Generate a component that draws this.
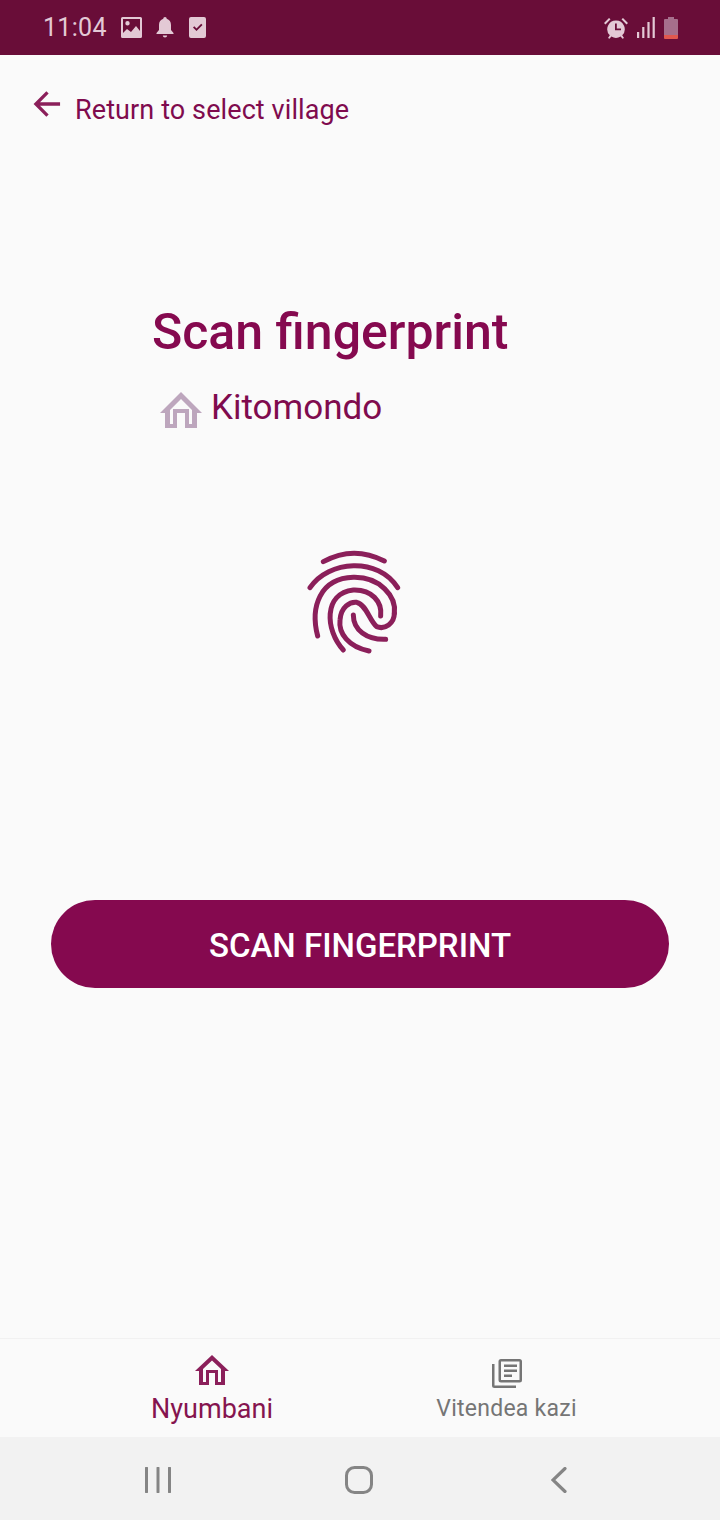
<script>
</script>

<div class="screen">
  <div class="status">
    <span class="time">11:04</span>
    <svg class="si img" viewBox="0 0 21 21"><path fill-rule="evenodd" d="M1.500 0h18A1.500 1.500 0 0 1 21 1.500v18a1.500 1.500 0 0 1-1.500 1.500h-18A1.500 1.500 0 0 1 0 19.500v-18A1.500 1.500 0 0 1 1.500 0zM2 2v14l4-4 4 3 5-6 4 5V2zM6.500 4a2.200 2.200 0 1 1 0 4.400 2.200 2.200 0 0 1 0-4.400z"/></svg>
    <svg class="si bell" viewBox="0 0 18 21"><path d="M9 0c1 0 1.700.8 1.700 1.800C13.500 2.600 15 5 15 8v5l2.500 3v1H.5v-1L3 13V8c0-3 1.500-5.400 4.300-6.200C7.300.8 8 0 9 0zM6.800 18.500h4.400A2.200 2.200 0 0 1 9 20.600a2.200 2.200 0 0 1-2.200-2.100z"/></svg>
    <svg class="si check" viewBox="0 0 17 21"><path fill-rule="evenodd" d="M2 0h13a2 2 0 0 1 2 2v17a2 2 0 0 1-2 2H2a2 2 0 0 1-2-2V2a2 2 0 0 1 2-2zM4 10.500l3.500 3.500 6-6-1.300-1.200-4.700 4.600-2.200-2.200z"/></svg>
    <span class="spacer"></span>
    <svg class="si alarm" viewBox="0 0 24 22"><path fill-rule="evenodd" d="M12 3.500a8.700 8.700 0 0 1 6.200 14.800l1.800 2.700-1.500.8-1.900-2.300a8.700 8.700 0 0 1-9.200 0L5.500 21.800 4 21l1.800-2.700A8.700 8.700 0 0 1 12 3.500zM11 6.500v6.800h6v-1.700h-4.200V6.500zM0 6l5-5 1.500 1.300L1.500 7.500zM24 6l-5-5-1.500 1.300 5 5.200z"/></svg>
    <svg class="si signal" viewBox="0 0 18 21"><path d="M0 15h2.200v6H0zM5.200 10h2.200v11H5.200zM10.400 5h2.200v16h-2.200zM15.600 0h2.200v21h-2.200z"/></svg>
    <svg class="batt" viewBox="0 0 14 22"><path fill="#a66f8c" d="M4 0h6v2h3a1 1 0 0 1 1 1v15H0V3a1 1 0 0 1 1-1h3z"/><path fill="#e0584f" d="M0 18h14v3a1 1 0 0 1-1 1H1a1 1 0 0 1-1-1z"/></svg>
  </div>

  <main class="main">
    <div class="back">
      <svg class="arrow" viewBox="0 0 30 28"><path d="M28 14H3M15 2 3 14l12 12"/></svg>
      <span>Return to select village</span>
    </div>

    <div class="head">
      <h1>Scan fingerprint</h1>
      <div class="village">
        <svg class="house" viewBox="0 0 42 36"><path fill-rule="evenodd" d="M21 0 42 21h-5v15H25V21h-8v15H5V21H0zM21 7 10 18v14h3V17h16v15h3V18z"/></svg>
        <span>Kitomondo</span>
      </div>
    </div>

    <svg class="print" viewBox="0 0 360 375">
      <path d="M85 65Q175 15 268 63"/>
      <path d="M45 143C100 60 250 50 308 143"/>
      <path d="M68 288C45 200 75 115 175 112C255 110 305 170 298 220"/>
      <path d="M145 330C90 270 85 160 175 150C230 148 262 185 257 228"/>
      <path d="M222 333C160 320 130 280 135 240C138 200 165 185 185 187C215 195 222 240 245 260C270 270 298 250 298 220"/>
      <path d="M175 225C175 270 215 300 272 298"/>
    </svg>

    <button class="scan">SCAN FINGERPRINT</button>
  </main>

  <nav class="tabs">
    <div class="tab active">
      <svg class="tabicon" viewBox="0 0 34 30"><path fill-rule="evenodd" d="M17 0 34 16h-4v14H20V18h-6v12H4V16H0zM17 5.500 8 14v13h3V15h12v12h3V14z"/></svg>
      <span>Nyumbani</span>
    </div>
    <div class="tab">
      <svg class="tabicon news" viewBox="0 0 30 30"><path fill-rule="evenodd" d="M2.500 5v21.500H24V29H2.500A2.500 2.500 0 0 1 0 26.500V5zM9 0h18.500A2.500 2.500 0 0 1 30 2.500V21a2.500 2.500 0 0 1-2.500 2.500H9A2.500 2.500 0 0 1 6.500 21V2.500A2.500 2.500 0 0 1 9 0zM9 2.500V21h18.500V2.500zM12 5.500h13V8H12zM12 10.500h13V13H12zM12 15.500h8V18h-8z"/></svg>
      <span class="lbl2">Vitendea kazi</span>
    </div>
  </nav>

  <div class="sysnav">
    <svg class="recents" viewBox="0 0 26 26"><path d="M1.500 1v24M13 1v24M24.500 1v24"/></svg>
    <svg class="home" viewBox="0 0 28 28"><rect x="1.500" y="1.500" width="25" height="25" rx="8"/></svg>
    <svg class="backk" viewBox="0 0 16 26"><path d="M14 1.500 2 13l12 11.500"/></svg>
  </div>
</div>

<style>
  :global(body) { margin: 0; }
  .screen {
    width: 720px; height: 1520px; display: flex; flex-direction: column;
    background: #fafafa; font-family: Roboto, sans-serif; overflow: hidden;
  }
  .status {
    height: 55px; flex: none; background: #690d38; color: #e3c9d5;
    display: flex; align-items: center; padding: 0 42px 0 43px; box-sizing: border-box;
  }
  .time { font-size: 25px; letter-spacing: 0.3px; margin-right: 14px; }
  .si { fill: #e3c9d5; display: block; }
  .img { width: 21px; height: 21px; margin-right: 14px; }
  .bell { width: 18px; height: 21px; margin-right: 15px; }
  .check { width: 17px; height: 21px; }
  .spacer { flex: 1; }
  .alarm { width: 24px; height: 22px; margin-right: 9px; }
  .signal { width: 18px; height: 21px; margin-right: 9px; }
  .batt { width: 14px; height: 22px; display: block; }

  .main { flex: 1; display: flex; flex-direction: column; min-height: 0; }
  .back {
    display: flex; align-items: flex-start; padding: 35px 0 0 33px;
    color: #7f0b4e; font-size: 27px; letter-spacing: 0.1px; height: 40px;
  }
  .back span { margin-left: 13px; margin-top: 3px; line-height: 34px; }
  .arrow { width: 29px; height: 28px; fill: none; stroke: #8b1f5a; stroke-width: 3.400; flex: none; }

  .head { margin: 174px 0 0 152px; }
  h1 { margin: 0; font-size: 50px; font-weight: 500; color: #85094f; line-height: 56px; }
  .village { display: flex; align-items: center; margin: 28px 0 0 8px; color: #7f0b4e; font-size: 35px; line-height: 40px; }
  .house { width: 42px; height: 36px; fill: #bda6bd; margin-right: 9px; margin-top: 4px; }

  .print {
    width: 120px; height: 125px; margin: 112px 0 0 295px; display: block; fill: none;
    stroke: #8b1f5a; stroke-width: 15; stroke-linecap: round;
  }
  .scan {
    margin: 235px 51px 0; height: 88px; border: 0; border-radius: 44px; background: #85094f;
    color: #fff; font: 500 33px Roboto, sans-serif; padding: 2px 0 0;
  }

  .tabs {
    height: 99px; flex: none; display: flex; box-sizing: border-box;
    border-top: 1px solid #f1f1f1; background: #fafafa; padding: 16px 66px 0 65px;
  }
  .tab { width: 294px; display: flex; flex-direction: column; align-items: center; color: #85144f; font-size: 27px; line-height: 32px; }
  .tabicon { width: 34px; height: 30px; fill: #8b1f5a; margin-bottom: 8px; display: block; }
  .news { width: 30px; height: 30px; fill: #757575; margin-top: 4px; margin-bottom: 3px; margin-left: 1px; }
  .lbl2 { color: #757575; font-size: 23px; letter-spacing: 0.25px; margin-top: 1px; margin-left: 1px; }

  .sysnav {
    height: 83px; flex: none; background: #f2f2f2; position: relative;
    display: flex; align-items: center; padding: 2px 0 0 145px; box-sizing: border-box;
  }
  .sysnav svg { fill: none; stroke: #858585; stroke-width: 3; display: block; stroke-linecap: round; }
  .recents { width: 26px; height: 26px; margin-right: 174px; }
  .home { width: 28px; height: 28px; margin-right: 178px; }
  .backk { width: 16px; height: 26px; stroke-width: 3.200 !important; }
</style>
